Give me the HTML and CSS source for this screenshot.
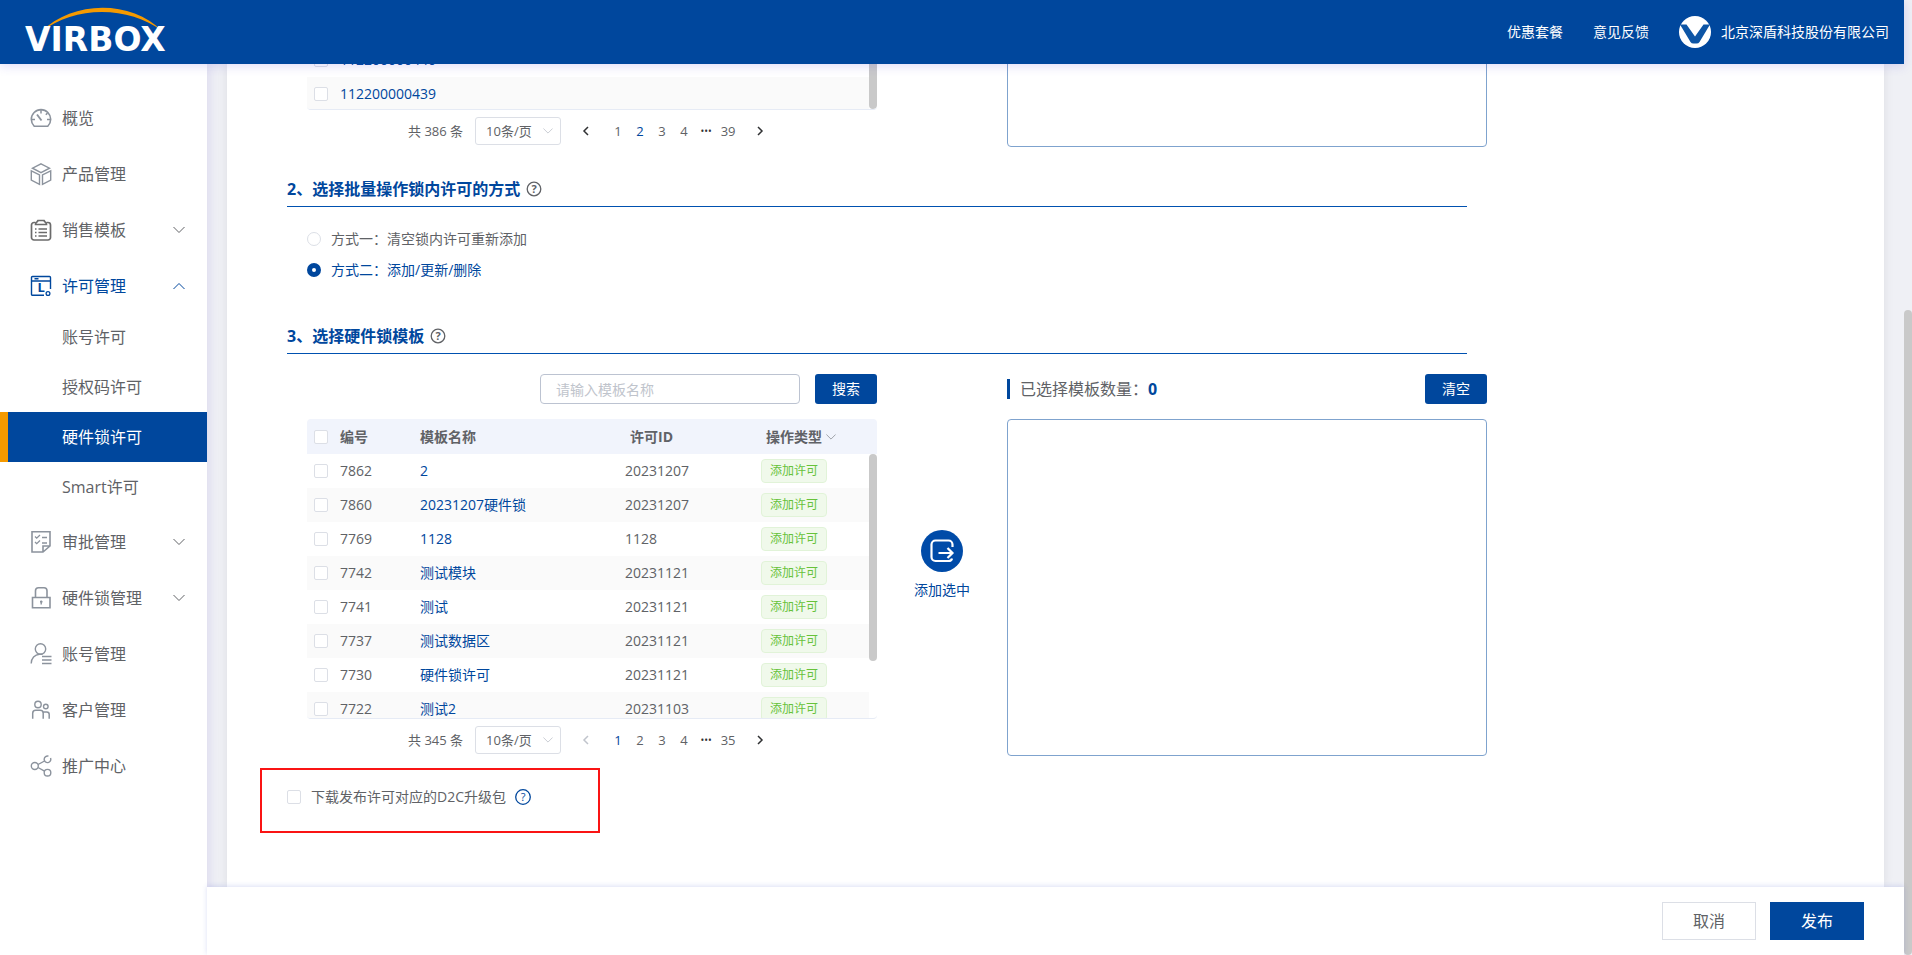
FILE: index.html
```html
<!DOCTYPE html>
<html lang="zh-CN">
<head>
<meta charset="utf-8">
<title>Virbox 硬件锁许可</title>
<link rel="stylesheet" href="styles.css">
</head>
<body>
<svg class="sprite" aria-hidden="true">
  <symbol id="down" viewBox="0 0 12 12"><path d="M0.500 3l5.500 5.500 5.500-5.500"/></symbol>
  <symbol id="up" viewBox="0 0 12 12"><path d="M0.500 9l5.500-5.500 5.500 5.500"/></symbol>
  <symbol id="left" viewBox="0 0 12 12"><path d="M8 2L4 6l4 4"/></symbol>
  <symbol id="right" viewBox="0 0 12 12"><path d="M4 2l4 4-4 4"/></symbol>
</svg>

<header class="topbar">
  <a class="logo" href="#" aria-label="VIRBOX">
    <svg viewBox="0 0 156 56" width="156" height="56">
      <path d="M16 28C48-4 106-4 137 27C104 2 50 1 16 28z" fill="#f59a00"/>
      <text x="0" y="47">VIRBOX</text>
    </svg>
  </a>
  <nav class="toplinks">
    <a href="#">优惠套餐</a>
    <a href="#">意见反馈</a>
    <a class="company" href="#">
      <svg viewBox="0 0 32 32" width="32" height="32"><circle cx="16" cy="16" r="16" fill="#fff"/><path d="M1 8.500h6.500L16 20.500l8.500-12H31L20.500 26q-1 1.500-3 1.500h-3q-2 0-3-1.500z" fill="#0d55a5"/></svg>
      <span>北京深盾科技股份有限公司</span>
    </a>
  </nav>
</header>

<div class="body">
  <nav class="sidebar">
    <a class="item" href="#"><svg class="ico" viewBox="0 0 22 22"><path d="M4.200 19.200A9.700 9.700 0 1 1 17.800 19.200z" stroke-width="1.600"/><path d="M11 3v3.500M2 12.500h3M17 12.500h3M15.800 7.800l1.700-1.700" stroke-width="1.500"/><path d="M7 7.500l4.500 6" stroke-width="1.900"/></svg><span>概览</span></a>
    <a class="item" href="#"><svg class="ico" viewBox="0 0 22 22"><path d="M11 .8L19.500 5.200 11 9.600 2.500 5.200zM1.300 7.800l8.200 4.200v9.300L1.300 17zM20.700 7.800L12.500 12v9.300l8.200-4.300z"/></svg><span>产品管理</span></a>
    <a class="item" href="#"><svg class="ico dark" viewBox="0 0 22 22"><path d="M5.500 3.500H4a2.500 2.500 0 0 0-2.500 2.500v12.500A2.500 2.500 0 0 0 4 21h14a2.500 2.500 0 0 0 2.500-2.500V6A2.500 2.500 0 0 0 18 3.500h-1.500M5.500 5.500c0-2 1.500-2 2.500-4h6c1 2 2.500 2 2.500 4z" stroke-width="1.700"/><path d="M5 10h1.500M8.500 10H17M5 13.500h1.500M8.500 13.500H17M5 17h1.500M8.500 17H17" stroke-width="1.500"/></svg><span>销售模板</span><svg class="chev"><use href="#down"/></svg></a>
    <a class="item open" href="#"><svg class="ico" viewBox="0 0 22 22"><path d="M14 20.300H2.500a1 1 0 0 1-1-1V2.500a1 1 0 0 1 1-1h17a1 1 0 0 1 1 1V14M1.500 6h19M4.500 3.800h4" stroke-width="1.400"/><circle cx="18" cy="18.500" r="1.900" stroke-width="1.300"/><text x="7.500" y="17">L</text></svg><span>许可管理</span><svg class="chev"><use href="#up"/></svg></a>
    <a class="sub" href="#">账号许可</a>
    <a class="sub" href="#">授权码许可</a>
    <a class="sub current" href="#">硬件锁许可</a>
    <a class="sub" href="#">Smart许可</a>
    <a class="item" href="#"><svg class="ico" viewBox="0 0 22 22"><path d="M13 21H2V.8h18V15zM13 21v-6h7" stroke-width="1.600"/><path d="M5 5.500l1.700 1.700L10 4M5 11l1.700 1.700L10 9.500M12 6.500h5M12 12h5" stroke-width="1.300"/></svg><span>审批管理</span><svg class="chev"><use href="#down"/></svg></a>
    <a class="item" href="#"><svg class="ico" viewBox="0 0 22 22"><path d="M2.500 10.500h17.500v10.300H2.500zM5.500 10.500V3.800a3 3 0 0 1 3-3h5.500a3 3 0 0 1 3 3v6.700" stroke-width="1.600"/><path d="M11.200 13.500v4M10 14.700h2.500" stroke-width="1.400"/></svg><span>硬件锁管理</span><svg class="chev"><use href="#down"/></svg></a>
    <a class="item" href="#"><svg class="ico" viewBox="0 0 22 22"><circle cx="10.500" cy="6" r="5.200"/><path d="M1.200 20.500c0-5 3.500-9 8.300-9.300h3M12 13.500h9.500M12 17h9.500M12 20.500h9.500" stroke-width="1.400"/></svg><span>账号管理</span></a>
    <a class="item" href="#"><svg class="ico" viewBox="0 0 22 22"><circle cx="8" cy="5.500" r="3.200"/><circle cx="15.800" cy="7.500" r="2.300"/><path d="M2.700 19.700v-5.500q0-3 3-3h4.500q3 0 3 3v5.500M13.500 13h3.200q2.500 0 2.500 2.500v4.200" stroke-width="1.500"/></svg><span>客户管理</span></a>
    <a class="item" href="#"><svg class="ico" viewBox="0 0 22 22"><circle cx="4.800" cy="11" r="3.500"/><path d="M20.500 3a3.300 3.300 0 1 1-2-1.800M8 9.500l6.500-3.500M8 12.500l6.500 3.700"/><circle cx="17.500" cy="17.700" r="3.300"/></svg><span>推广中心</span></a>
  </nav>

  <div class="workspace">
    <main class="card">
      <div class="content">
        <section class="transfer">
          <div class="source">
            <div class="scroll tail">
              <table class="grid">
                <colgroup><col class="c-check"><col><col class="c-bar"></colgroup>
                <tbody>
                  <tr><td><input type="checkbox" aria-label="112200000440"></td><td><a href="#">112200000440</a></td><td></td></tr>
                  <tr><td><input type="checkbox" aria-label="112200000439"></td><td><a href="#">112200000439</a></td><td></td></tr>
                </tbody>
              </table>
              <i class="thumb"></i>
            </div>
            <div class="pager">
              <span>共 386 条</span>
              <span class="size"><select aria-label="每页条数"><option>10条/页</option></select><svg><use href="#down"/></svg></span>
              <button class="step" aria-label="上一页"><svg><use href="#left"/></svg></button>
              <button>1</button><button class="on">2</button><button>3</button><button>4</button><button class="more">•••</button><button>39</button>
              <button class="step" aria-label="下一页"><svg><use href="#right"/></svg></button>
            </div>
          </div>
          <div></div>
          <div class="picked"></div>
        </section>

        <h2>2、选择批量操作锁内许可的方式<svg class="help" viewBox="0 0 16 16"><circle cx="8" cy="8" r="6.800"/><text x="8" y="12">?</text></svg></h2>
        <div class="radios">
          <label><input type="radio" name="mode"><span>方式一：清空锁内许可重新添加</span></label>
          <label><input type="radio" name="mode" checked><span>方式二：添加/更新/删除</span></label>
        </div>

        <h2 class="third">3、选择硬件锁模板<svg class="help" viewBox="0 0 16 16"><circle cx="8" cy="8" r="6.800"/><text x="8" y="12">?</text></svg></h2>
        <section class="transfer main">
          <div class="search">
            <input type="text" placeholder="请输入模板名称" aria-label="模板名称">
            <button class="primary">搜索</button>
          </div>
          <div></div>
          <div class="summary">
            <span class="count">已选择模板数量：<b>0</b></span>
            <button class="primary">清空</button>
          </div>

          <div class="source">
            <div class="scroll full">
              <table class="grid">
                <colgroup><col class="c-check"><col class="c-no"><col class="c-name"><col class="c-id"><col><col class="c-bar"></colgroup>
                <thead><tr><th><input type="checkbox" aria-label="全选"></th><th>编号</th><th>模板名称</th><th class="wide">许可ID</th><th class="wide">操作类型<svg><use href="#down"/></svg></th><th></th></tr></thead>
                <tbody>
                  <tr><td><input type="checkbox" aria-label="7862"></td><td>7862</td><td><a href="#">2</a></td><td>20231207</td><td><span class="tag">添加许可</span></td><td></td></tr>
                  <tr><td><input type="checkbox" aria-label="7860"></td><td>7860</td><td><a href="#">20231207硬件锁</a></td><td>20231207</td><td><span class="tag">添加许可</span></td><td></td></tr>
                  <tr><td><input type="checkbox" aria-label="7769"></td><td>7769</td><td><a href="#">1128</a></td><td>1128</td><td><span class="tag">添加许可</span></td><td></td></tr>
                  <tr><td><input type="checkbox" aria-label="7742"></td><td>7742</td><td><a href="#">测试模块</a></td><td>20231121</td><td><span class="tag">添加许可</span></td><td></td></tr>
                  <tr><td><input type="checkbox" aria-label="7741"></td><td>7741</td><td><a href="#">测试</a></td><td>20231121</td><td><span class="tag">添加许可</span></td><td></td></tr>
                  <tr><td><input type="checkbox" aria-label="7737"></td><td>7737</td><td><a href="#">测试数据区</a></td><td>20231121</td><td><span class="tag">添加许可</span></td><td></td></tr>
                  <tr><td><input type="checkbox" aria-label="7730"></td><td>7730</td><td><a href="#">硬件锁许可</a></td><td>20231121</td><td><span class="tag">添加许可</span></td><td></td></tr>
                  <tr><td><input type="checkbox" aria-label="7722"></td><td>7722</td><td><a href="#">测试2</a></td><td>20231103</td><td><span class="tag">添加许可</span></td><td></td></tr>
                </tbody>
              </table>
              <i class="thumb"></i>
            </div>
            <div class="pager">
              <span>共 345 条</span>
              <span class="size"><select aria-label="每页条数"><option>10条/页</option></select><svg><use href="#down"/></svg></span>
              <button class="step" disabled aria-label="上一页"><svg><use href="#left"/></svg></button>
              <button class="on">1</button><button>2</button><button>3</button><button>4</button><button class="more">•••</button><button>35</button>
              <button class="step" aria-label="下一页"><svg><use href="#right"/></svg></button>
            </div>
          </div>
          <button class="add">
            <svg viewBox="0 0 42 42" width="42" height="42"><circle cx="21" cy="21" r="21" fill="#004ba8"/><path d="M31.500 17v-2.500a4 4 0 0 0-4-4h-13a4 4 0 0 0-4 4v12.500a4 4 0 0 0 4 4h13q3 0 3.500-2.500M17.500 23h13M26.500 18l5 5-5 5" fill="none" stroke="#fff" stroke-width="2.200"/></svg>
            <span>添加选中</span>
          </button>
          <div class="picked"></div>
        </section>

        <div class="package">
          <label><input type="checkbox"><span>下载发布许可对应的D2C升级包</span></label>
          <svg class="help" viewBox="0 0 16 16"><circle cx="8" cy="8" r="7.300"/><text x="8" y="12">?</text></svg>
          <i class="highlight"></i>
        </div>
      </div>
    </main>
    <footer class="actions">
      <button class="cancel">取消</button>
      <button class="publish">发布</button>
    </footer>
  </div>
</div>
<div class="page-thumb"></div>
</body>
</html>
```
FILE: styles.css
```css
* { box-sizing: border-box; }
body {
  margin: 0;
  height: 100vh;
  display: grid;
  grid-template-columns: minmax(0, 1fr) 8px;
  grid-template-rows: 64px minmax(0, 1fr);
  overflow: hidden;
  background: #eff0f5;
  color: #606266;
  font: 14px/20px "Open Sans", "Noto Sans CJK SC", sans-serif;
}
a { color: inherit; text-decoration: none; }
button, input, select { font: inherit; color: inherit; margin: 0; }
button { padding: 0; border: 0; background: none; cursor: pointer; }
svg { fill: none; stroke: currentColor; flex: none; }
.sprite { position: absolute; width: 0; height: 0; }

.topbar {
  z-index: 3;
  display: flex;
  align-items: center;
  justify-content: space-between;
  padding: 0 15px 0 25px;
  background: #00479d;
  color: #fff;
  box-shadow: 0 2px 10px rgba(80, 60, 220, .18);
}
.logo { display: flex; }
.logo svg { stroke: none; overflow: visible; }
.logo text { fill: #fff; font: bold 33px "DejaVu Sans", sans-serif; }
.toplinks { display: flex; align-items: center; gap: 30px; }
.company { display: flex; align-items: center; gap: 10px; }
.company svg { stroke: none; }

.body { grid-row: 2; display: grid; grid-template-columns: 207px minmax(0, 1fr); }
.sidebar {
  z-index: 1;
  padding-top: 24px;
  background: #fff;
  font-size: 16px;
  box-shadow: 2px 0 10px rgba(80, 60, 200, .12);
}
.item {
  display: flex;
  align-items: center;
  height: 56px;
  padding: 3px 22px 0 30px;
}
.item.open { color: #00479d; }
.item span { margin-left: 10px; }
.ico { width: 22px; height: 22px; color: #8c939d; stroke-width: 1.400; overflow: visible; }
.ico.dark { color: #6b6b6b; }
.open .ico { color: #00479d; }
.ico text { font: bold 13px "Open Sans", sans-serif; fill: currentColor; stroke: none; }
.chev { width: 12px; height: 12px; margin-left: auto; }
.sub { display: block; padding-left: 62px; line-height: 50px; }
.sub.current { background: #00479d; color: #fff; border-left: 8px solid #f59a00; padding-left: 54px; }

.workspace { display: grid; grid-template-rows: minmax(0, 1fr) 68px; }
.card {
  margin: 0 20px;
  padding-left: 60px;
  background: #fff;
  overflow: hidden;
  box-shadow: 0 0 10px rgba(0, 0, 0, .08);
}
/* the panel is shown scrolled, with its first list running under the top bar */
.content { margin-top: -21px; }
.transfer {
  display: grid;
  grid-template-columns: 570px 130px 480px;
  padding-left: 20px;
}
.transfer.main { row-gap: 15px; padding-top: 20px; }
.picked { border: 1px solid #7fa3ce; border-radius: 4px; }
.source { padding-bottom: 2px; }

.scroll {
  position: relative;
  overflow: hidden;
  border-bottom: 1px solid #e6ebf5;
  border-radius: 4px;
}
.scroll.tail { height: 67px; }
.scroll.full { height: 300px; }
.thumb {
  position: absolute;
  right: 0;
  width: 8px;
  background: #c9c9c9;
  border-radius: 4px;
}
.tail .thumb { top: 0; bottom: 0; }
.full .thumb { top: 35px; height: 207px; }

.grid { width: 100%; table-layout: fixed; border-collapse: collapse; }
.c-check { width: 33px; }
.c-no { width: 80px; }
.c-name { width: 205px; }
.c-id { width: 136px; }
.c-bar { width: 8px; }
.grid th, .grid td { padding: 0; text-align: left; }
.grid th { height: 35px; background: #f1f4fc; font-weight: bold; }
.grid th.wide { padding-left: 5px; }
.grid th svg { width: 10px; height: 10px; margin-left: 4px; color: #909399; }
.grid td { height: 34px; }
.grid tr:nth-child(even) td:not(:last-child) { background: #fafafa; }
.grid td a { color: #00479d; }
.grid th:first-child, .grid td:first-child { padding-left: 7px; }
.tag {
  display: block;
  width: 66px;
  border: 1px solid #e1f3d8;
  border-radius: 4px;
  background: #f0f9eb;
  color: #67c23a;
  font-size: 12px;
  line-height: 22px;
  text-align: center;
}

input[type="checkbox"], input[type="radio"] {
  appearance: none;
  display: block;
  flex: none;
  width: 14px;
  height: 14px;
  border: 1px solid #dcdfe6;
  border-radius: 2px;
  background: #fff;
}
input[type="radio"] { border-radius: 50%; }
input[type="radio"]:checked { border: 5px solid #00479d; }

.pager {
  display: flex;
  align-items: center;
  height: 28px;
  margin: 7px 0 0 101px;
  font-size: 13px;
}
.size { position: relative; margin: 0 14px 0 12px; }
.size select {
  appearance: none;
  display: block;
  width: 86px;
  height: 28px;
  padding: 0 10px;
  border: 1px solid #dcdfe6;
  border-radius: 3px;
  background: #fff;
}
.size svg { position: absolute; right: 8px; top: 9px; width: 10px; height: 10px; color: #c0c4cc; }
.pager button { width: 22px; height: 22px; }
.pager .on { color: #00479d; }
.pager .more { color: #303133; font-size: 10px; }
.pager .step { display: grid; place-items: center; margin-right: 10px; color: #303133; }
.pager .step:last-child { margin: 0 0 0 10px; }
.pager .step:disabled { color: #c0c4cc; }
.pager .step svg { width: 12px; height: 12px; stroke-width: 1.500; }

h2 {
  display: flex;
  align-items: center;
  width: 1180px;
  margin: 30px 0 0;
  padding-bottom: 5px;
  border-bottom: 1px solid #0051b0;
  color: #00479d;
  font-size: 16px;
  line-height: 24px;
}
h2.third { margin-top: 44px; }
.help { width: 16px; height: 16px; margin-left: 6px; stroke-width: 1.300; }
.help text { font: 11px "Open Sans", sans-serif; fill: currentColor; stroke: none; text-anchor: middle; }
h2 .help { color: #606266; }
h2 .help text { font-weight: bold; }
.radios { display: grid; gap: 11px; padding: 22px 0 0 20px; }
.radios label, .package label { display: flex; align-items: center; gap: 10px; }
.radios label:has(:checked) { color: #00479d; }

.search { display: flex; justify-content: flex-end; gap: 15px; }
.search input {
  width: 260px;
  height: 30px;
  padding: 0 15px;
  border: 1px solid #bcc3d1;
  border-radius: 4px;
}
.search input::placeholder { color: #c0c4cc; }
.primary { width: 62px; height: 30px; border-radius: 3px; background: #00479d; color: #fff; }
.summary { display: flex; align-items: center; justify-content: space-between; }
.count { border-left: 3px solid #00479d; padding-left: 10px; font-size: 16px; }
.count b { color: #00479d; }
.add {
  display: flex;
  flex-direction: column;
  align-items: center;
  gap: 8px;
  align-self: center;
  margin-bottom: 46px;
  color: #00479d;
}
.add svg { stroke: none; }

.package { position: relative; display: flex; align-items: center; width: 313px; margin-top: 31px; }
.package .help { margin-left: 9px; color: #00479d; }
.highlight { position: absolute; inset: -19px 0 -26px -27px; border: 2px solid #fa1414; }

.actions {
  z-index: 2;
  display: flex;
  align-items: center;
  justify-content: flex-end;
  gap: 14px;
  padding-right: 40px;
  background: #fff;
  box-shadow: 0 -1px 5px rgba(60, 80, 200, .18);
  font-size: 16px;
}
.actions button { width: 94px; height: 38px; }
.cancel { border: 1px solid #dcdfe6; }
.actions .cancel { border: 1px solid #dcdfe6; }
.publish { background: #00479d; color: #fff; }

.page-thumb { grid-column: 2; grid-row: 1 / 3; margin-top: 310px; border-radius: 4px; background: #c9c9c9; }
```
